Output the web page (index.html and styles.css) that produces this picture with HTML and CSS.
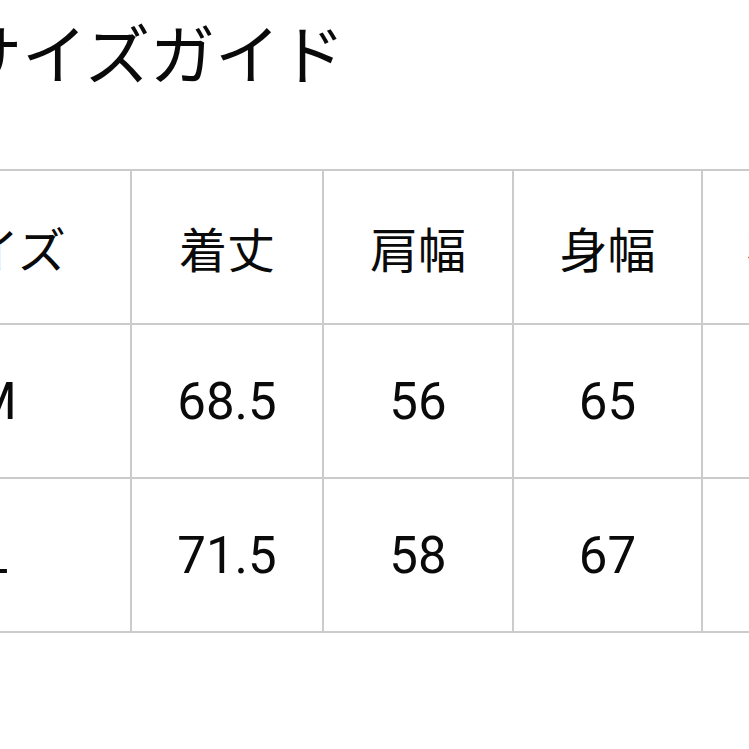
FILE: index.html
```html
<!DOCTYPE html>
<html lang="ja">
<head>
<meta charset="utf-8">
<link rel="stylesheet" href="styles.css">
</head>
<body>
<div class="page">
  <h1 class="title">サイズガイド</h1>
  <table class="size-table">
    <tr class="head">
      <th class="c-size">サイズ</th>
      <th class="c-a">着丈</th>
      <th class="c-b">肩幅</th>
      <th class="c-c">身幅</th>
      <th class="c-d">袖丈</th>
    </tr>
    <tr>
      <td class="c-size">M</td>
      <td class="c-a">68.5</td>
      <td class="c-b">56</td>
      <td class="c-c">65</td>
      <td class="c-d">60</td>
    </tr>
    <tr>
      <td class="c-size">L</td>
      <td class="c-a">71.5</td>
      <td class="c-b">58</td>
      <td class="c-c">67</td>
      <td class="c-d">61</td>
    </tr>
  </table>
</div>
</body>
</html>
```

FILE: styles.css
```css
html, body {
  margin: 0;
  padding: 0;
  background: #ffffff;
  overflow: hidden;
}
.page {
  width: 749px;
  height: 749px;
  overflow: hidden;
  font-family: "Noto Sans CJK JP", sans-serif;
  color: #0a0a0a;
}
.title {
  margin: 0 0 0 -43px;
  padding-top: 12px;
  font-size: 65px;
  font-weight: 400;
  line-height: 78px;
  white-space: nowrap;
}
.size-table {
  margin-top: 79px;
  margin-left: -143px;
  border-collapse: collapse;
  table-layout: fixed;
  width: 1020px;
}
.size-table th,
.size-table td {
  height: 152px;
  padding: 0;
  border: 2px solid #cbcbcb;
  text-align: center;
  vertical-align: middle;
  font-weight: 400;
  white-space: nowrap;
}
.size-table .c-size { width: 271px; }
.size-table .c-a { width: 190px; }
.size-table .c-b { width: 188px; }
.size-table .c-c { width: 187px; }
.size-table .c-d { width: 184px; }
.size-table .c-d.head-cell { text-align: left; }
.size-table th {
  font-size: 48px;
  font-family: "Noto Sans CJK JP", sans-serif;
}
.size-table td {
  font-size: 51px;
  font-family: Roboto, "Noto Sans CJK JP", sans-serif;
}
```
